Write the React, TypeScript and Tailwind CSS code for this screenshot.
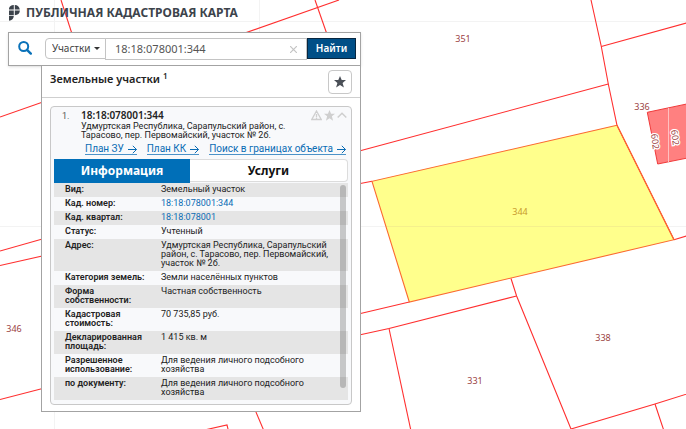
import {useState} from 'react';

const FONT = "font-['Noto_Sans','Open_Sans',sans-serif]";
const SMALL_FONT = "font-['Roboto','Noto_Sans',sans-serif]";

interface InfoRow {label: string;
 value: string;
 link?: boolean;}

const rows: InfoRow[] = [
 {label: 'Вид:', value: 'Земельный участок'},
 {label: 'Кад. номер:', value: '18:18:078001:344', link: true},
 {label: 'Кад. квартал:', value: '18:18:078001', link: true},
 {label: 'Статус:', value: 'Учтенный'},
 {label: 'Адрес:', value: 'Удмуртская Республика, Сарапульский район, с. Тарасово, пер. Первомайский, участок № 2б.'},
 {label: 'Категория земель:', value: 'Земли населённых пунктов'},
 {label: 'Форма собственности:', value: 'Частная собственность'},
 {label: 'Кадастровая стоимость:', value: '70 735,85 руб.'},
 {label: 'Декларированная площадь:', value: '1 415 кв. м'},
 {label: 'Разрешенное использование:', value: 'Для ведения личного подсобного хозяйства'},
 {label: 'по документу:', value: 'Для ведения личного подсобного хозяйства'},
];

const parcelLines = [
 'M591 0L601.3 46.5L608.3 84L617 125.3L674 239.7',
 'M601.3 46.5L690 22',
 'M608.3 84L350 153.5',
 'M372 181.3L350 185.5',
 'M409.3 302L350 316',
 'M674 239.7L690 235',
 'M511 278.5L516.6 296L571 429L655 404L690 393',
 'M516.6 296L389 328.5L350 337',
 'M389 328.5L411 431',
 'M655 404L664 431',
 'M61 0L74 40',
 'M225 40L339 0',
 'M315 0L329 40',
 'M0 117L60 96',
 'M0 251L60 234',
 'M0 265.5L60 252',
 'M0 399.5L60 384',
 'M250 398L264 431',
 'M200 431L227 425L228.5 431',
];

const parcelLabels = [
 {text: '351', x: 463, y: 42},
 {text: '336', x: 642, y: 110},
 {text: '346', x: 14, y: 332},
 {text: '331', x: 475, y: 384},
 {text: '338', x: 603, y: 341},
];

// Parcel borders and numbers under the panels
function CadastreMap() {
 return (
 <svg className="absolute inset-0 h-full w-full" aria-hidden="true">
 <path d="M0 21.5H686M0 226.5H686M54.5 0V429M259.5 0V32" stroke="#f3f3f3" fill="none" />
 <polygon points="617,125.3 372,181.3 409.3,302 674,239.7" fill="#ffff8c" />
 <path d="M386 226.5H667" stroke="#f5f08c" />
 {parcelLines.map((d) => (<path key={d} d={d} fill="none" stroke="#ff2f2f" strokeWidth="1.1" />))}
 <polygon points="617,125.3 372,181.3 409.3,302 674,239.7" fill="none" stroke="#fb6a30" strokeWidth="1.1" />
 <polygon points="647.3,112.3 690,103.3 690,157.5 657.7,164" fill="#ff8080" stroke="#f03a3a" />
 <path d="M668.5 108V162" stroke="#ffc0c0" />
 <g fontSize="9" textAnchor="middle" fill="#9c3f3f">
 {parcelLabels.map((l) => (<text key={l.text} x={l.x} y={l.y}>{l.text}</text>))}
 <text x="520" y="215" fill="#c89a2c">344</text>
 <g stroke="#ffffff" strokeWidth="2.5" paintOrder="stroke">
 <text transform="translate(652 142) rotate(82)">602</text>
 <text transform="translate(672 138) rotate(82)">602</text>
 </g>
 </g>
 </svg>
 );
}

function Logo() {
 return (
 <svg className="h-4 w-[11px]" viewBox="0 0 11 16" fill="#3c434b" aria-hidden="true">
 <path d="M4.8 0v4.6H0V3.4C.4 1.400 2.200.1 4.800 0zM5.800 0c2.700.1 4.700 1.600 5 4.600h-5zM0 5.500h4.800v4.700H0zM5.800 5.500h5.100c-.2 2.900-2 4.600-5.100 4.700zM0 11.100h4.800c-.1 2.600-1.800 4.300-4.800 4.700z" />
 </svg>
 );
}

function StarIcon({className}: {className: string}) {
 return (
 <svg className={className} viewBox="0 0 12 12" fill="currentColor" aria-hidden="true">
 <path d="M6 0l1.700 4H12L8.600 6.900 9.900 11.600 6 9 2.100 11.600 3.400 6.900 0 4h4.300z" />
 </svg>
 );
}

function ArrowLink({children}: {children: string}) {
 return (
 <a href="#" className="flex items-center gap-1 border-b border-[#4b92c8] leading-[10px] text-[#0a6cb4]">
 {children}
 <svg className="h-[9px] w-[9px]" viewBox="0 0 9 9" fill="none" stroke="currentColor" aria-hidden="true">
 <path d="M0 4.500H8.500M4.800.8L8.500 4.500L4.800 8.200" />
 </svg>
 </a>
 );
}

function SearchBar() {
 const [query, setQuery] = useState('18:18:078001:344');
 return (
 <form className="flex items-start border border-[#a3a3a3] bg-white py-[5px] pr-1 pl-[9px] shadow-sm" onSubmit={(e) => e.preventDefault()}>
 <svg className="mt-[3px] mr-[13px] h-[14px] w-[14px] shrink-0" viewBox="0 0 14 14" fill="none" stroke="#0a72b9" aria-hidden="true">
 <circle cx="5.700" cy="5.500" r="4.500" strokeWidth="2" />
 <path d="M9 8.800L12.800 12.600" strokeWidth="2.400" strokeLinecap="round" />
 </svg>
 <div className="relative w-[61px] shrink-0">
 <select aria-label="Тип объекта" className="block h-[21px] w-full appearance-none rounded-l-sm border border-[#c4c4c4] bg-white pl-[6px] text-[10px] text-[#444]">
 <option>Участки</option>
 </select>
 <svg className="pointer-events-none absolute top-[9px] right-[6px] h-[3px] w-[6px]" viewBox="0 0 6 3" fill="#333" aria-hidden="true">
 <path d="M0 0H6L3 3z" />
 </svg>
 </div>
 <div className="-ml-px flex h-[22px] min-w-0 grow items-center border border-[#c4c4c4]">
 <input aria-label="Кадастровый номер" className="min-w-0 grow pl-[9px] text-[11px] text-[#555] outline-none" value={query} onChange={(e) => setQuery(e.target.value)} />
 <button type="button" aria-label="Очистить" className="mr-2 p-px" onClick={() => setQuery('')}>
 <svg className="h-[7px] w-[7px]" viewBox="0 0 7 7" stroke="#c4c4c4" strokeWidth="1.200" aria-hidden="true">
 <path d="M0 0L7 7M7 0L0 7" />
 </svg>
 </button>
 </div>
 <button type="submit" className="h-[21px] w-[49px] shrink-0 border border-[#08263f] bg-[#004f87] text-[10px] font-semibold text-white">Найти</button>
 </form>
 );
}

function ParcelCard() {
 const [tab, setTab] = useState<'info' | 'services'>('info');
 return (
 <article className="rounded-sm border border-[#c8c8c8] bg-[#f8f9fb] px-[3px] pt-[3px] pb-1">
 <header className={`flex pl-2 text-[9px] leading-[9px] text-[#222] ${SMALL_FONT}`}>
 <span className="w-[19px] shrink-0 pt-[2px] text-[#555]">1.</span>
 <div className="grow">
 <h3 className={`pb-px text-[10px] leading-[11px] font-semibold ${FONT}`}>18:18:078001:344</h3>
 <p className="max-w-[205px]">Удмуртская Республика, Сарапульский район, с. Тарасово, пер. Первомайский, участок № 2б.</p>
 </div>
 <div className="flex items-start gap-[2px] pr-px text-[#cfcfcf]">
 <svg className="h-[11px] w-[11px]" viewBox="0 0 11 11" fill="none" stroke="currentColor" strokeWidth="1.300" aria-hidden="true">
 <path d="M5.500 1L10.200 9.500H.8zM5.500 4v3M5.500 7.500v1.200" />
 </svg>
 <StarIcon className="h-[11px] w-[11px]" />
 <svg className="h-[11px] w-[10px]" viewBox="0 0 10 11" fill="none" stroke="currentColor" strokeWidth="1.500" aria-hidden="true">
 <path d="M.7 7.500L5 3.200L9.300 7.500" />
 </svg>
 </div>
 </header>
 <nav className={`mt-1 flex justify-between pr-[2px] pl-[31px] text-[10px] ${SMALL_FONT}`}>
 <ArrowLink>План ЗУ</ArrowLink>
 <ArrowLink>План КК</ArrowLink>
 <ArrowLink>Поиск в границах объекта</ArrowLink>
 </nav>
 <div className="mt-1 grid grid-cols-[136px_1fr] text-xs font-bold">
 <button type="button" className={`h-6 ${tab === 'info' ? 'bg-[#006fb8] text-white' : 'bg-white text-[#111]'}`} onClick={() => setTab('info')}>Информация</button>
 <button type="button" className={`h-[23px] rounded-r-sm border border-l-0 border-[#dcdcdc] ${tab === 'services' ? 'bg-[#006fb8] text-white' : 'bg-white text-[#111]'}`} onClick={() => setTab('services')}>Услуги</button>
 </div>
 <div className="relative">
 <table className={`w-full table-fixed text-left text-[9px] leading-[9px] text-[#222] ${SMALL_FONT}`}>
 <tbody>
 {rows.map((row) => (<tr key={row.label} className="align-top odd:bg-[#e5e5e5]">
 <th scope="row" className="w-[107px] pt-[2px] pr-2 pb-[3px] pl-[11px] font-semibold">{row.label}</th>
 <td className="pt-[2px] pr-3 pb-[3px]">
 {row.link ? <a href="#" className="text-[#0a6cb4]">{row.value}</a> : row.value}
 </td>
 </tr>))}
 </tbody>
 </table>
 {/* Scroll thumb */}
 <span className="absolute top-[2px] right-[2px] bottom-3 w-[6px] rounded-full bg-black/20" />
 </div>
 </article>
 );
}

export default function App() {
 return (
 <div className={`relative min-h-screen overflow-hidden bg-white ${FONT}`}>
 <CadastreMap />
 <main className="relative max-w-[361px] pl-2">
 <div className="flex h-8 items-center gap-[6px] pb-[6px] pl-px">
 <Logo />
 <h1 className="text-xs font-bold whitespace-nowrap text-[#3c434b]">ПУБЛИЧНАЯ КАДАСТРОВАЯ КАРТА</h1>
 </div>
 <SearchBar />
 <section className="-mt-px ml-[33px] border border-[#a3a3a3] bg-white">
 <div className="flex h-8 items-center justify-between border-b border-[#cfcfcf] pr-2 pl-2">
 <h2 className="pb-1 text-[11px] font-semibold text-[#222]">Земельные участки <sup className="text-[8px]">1</sup></h2>
 <button type="button" aria-label="В избранное" className="flex h-6 w-6 items-center justify-center rounded-sm border border-[#c8c8c8] text-[#4a4f57]">
 <StarIcon className="h-3 w-3" />
 </button>
 </div>
 <div className="px-2 pt-2 pb-[6px]">
 <ParcelCard />
 </div>
 </section>
 </main>
 </div>
 );
}
